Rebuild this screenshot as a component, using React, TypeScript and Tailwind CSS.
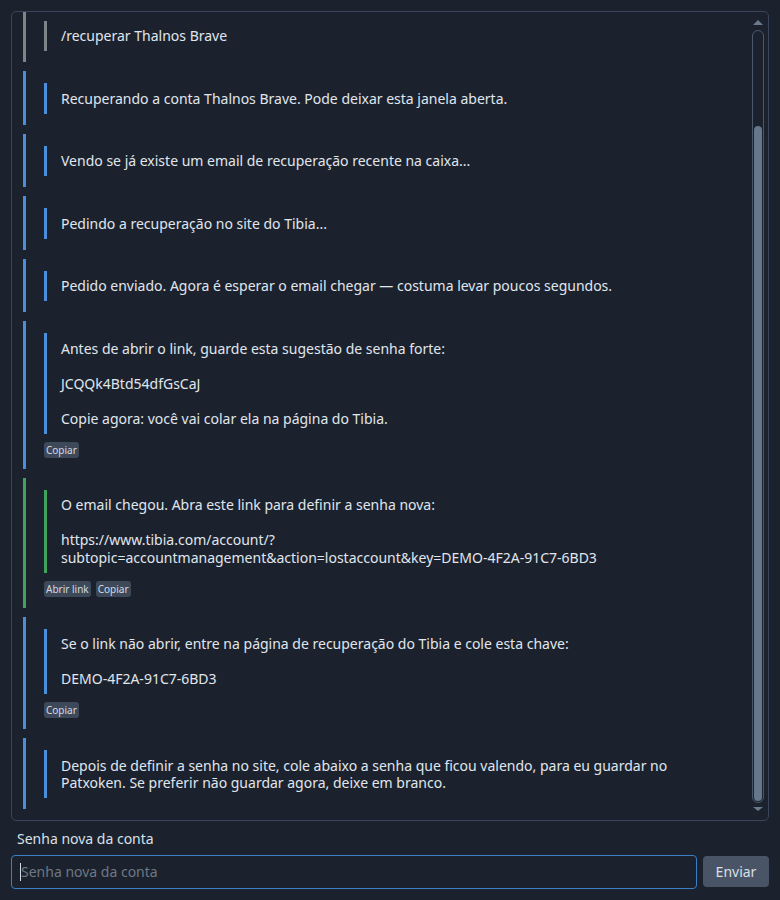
import React from "react";

type Msg = {
  color: "gray" | "blue" | "green";
  text: string;
  buttons?: string[];
};

const msgs: Msg[] = [
  { color: "gray", text: "/recuperar Thalnos Brave" },
  { color: "blue", text: "Recuperando a conta Thalnos Brave. Pode deixar esta janela aberta." },
  { color: "blue", text: "Vendo se já existe um email de recuperação recente na caixa..." },
  { color: "blue", text: "Pedindo a recuperação no site do Tibia..." },
  { color: "blue", text: "Pedido enviado. Agora é esperar o email chegar — costuma levar poucos segundos." },
  {
    color: "blue",
    text: "Antes de abrir o link, guarde esta sugestão de senha forte:\n\nJCQQk4Btd54dfGsCaJ\n\nCopie agora: você vai colar ela na página do Tibia.",
    buttons: ["Copiar"],
  },
  {
    color: "green",
    text: "O email chegou. Abra este link para definir a senha nova:\n\nhttps://www.tibia.com/account/?\nsubtopic=accountmanagement&action=lostaccount&key=DEMO-4F2A-91C7-6BD3",
    buttons: ["Abrir link", "Copiar"],
  },
  {
    color: "blue",
    text: "Se o link não abrir, entre na página de recuperação do Tibia e cole esta chave:\n\nDEMO-4F2A-91C7-6BD3",
    buttons: ["Copiar"],
  },
  {
    color: "blue",
    text: "Depois de definir a senha no site, cole abaixo a senha que ficou valendo, para eu guardar no\nPatxoken. Se preferir não guardar agora, deixe em branco.",
  },
];

const outerColor: Record<Msg["color"], string> = {
  gray: "border-l-[#7c8588]",
  blue: "border-l-[#4a8fdb]",
  green: "border-l-[#3fa35b]",
};

function Message({ m }: { m: Msg }) {
  return (
    <div className={`shrink-0 border-l-[3px] ${outerColor[m.color]} pl-[18px] pt-[12px] pb-[11px]`}>
      <div className={`border-l-[3px] ${outerColor[m.color]} pl-[14px] py-[6.5px] leading-[17.5px] whitespace-pre-wrap`}>
        {m.text}
      </div>
      {m.buttons && (
        <div className="mt-[8px] flex gap-[5px]">
          {m.buttons.map((b) => (
            <span
              key={b}
              className="h-[16px] px-[2px] rounded-[3px] bg-[#3d4859] text-[10px] leading-[16px] text-[#d3dae3]"
            >
              {b}
            </span>
          ))}
        </div>
      )}
    </div>
  );
}

export default function App() {
  return (
    <div className="w-[780px] h-[900px] bg-[#1b222d] font-['Noto_Sans',sans-serif] text-[14px] text-[#e0e6ee] flex flex-col px-[11px] pt-[11px]">
      <div className="h-[810px] shrink-0 border border-[#3a4657] rounded-[5px] flex overflow-hidden">
        <div className="flex-1 min-w-0 flex flex-col justify-end overflow-hidden pl-[11px] pb-[11px] gap-[9px]">
          {msgs.map((m, i) => (
            <Message key={i} m={m} />
          ))}
        </div>
        <div className="w-[16px] shrink-0 flex flex-col pt-[8px] pb-[9px] pr-[4px]">
          <div className="h-[5px] flex justify-center">
            <div className="w-0 h-0 border-x-[5px] border-x-transparent border-b-[5px] border-b-[#6a798b]" />
          </div>
          <div className="mt-[5px] flex-1 border border-[#4a586b] rounded-[6px] flex flex-col justify-end p-[1px]">
            <div className="h-[675px] rounded-[5px] bg-[#66778b]" />
          </div>
          <div className="mt-[4px] h-[4px] flex justify-center">
            <div className="w-0 h-0 border-x-[5px] border-x-transparent border-t-[4px] border-t-[#6a798b]" />
          </div>
        </div>
      </div>
      <div className="mt-[9px] pl-[6px] leading-[17.5px] text-[#d9e0e8]">Senha nova da conta</div>
      <div className="mt-[7px] flex items-center gap-[6px]">
        <div className="relative w-[686px] h-[34px] shrink-0">
          <input
            placeholder="Senha nova da conta"
            className="w-full h-full bg-[#1b222d] border border-[#3b7fc6] rounded-[4px] pl-[9px] text-[14px] text-[#dde4ec] placeholder:text-[#6e7884] outline-none"
          />
          <span className="absolute left-[9px] top-[8px] w-[1px] h-[18px] bg-[#d5dce4]" />
        </div>
        <button className="w-[68px] h-[31px] rounded-[4px] bg-[#4a5467] text-[#d9e0e8] text-[14px]">
          Enviar
        </button>
      </div>
    </div>
  );
}
